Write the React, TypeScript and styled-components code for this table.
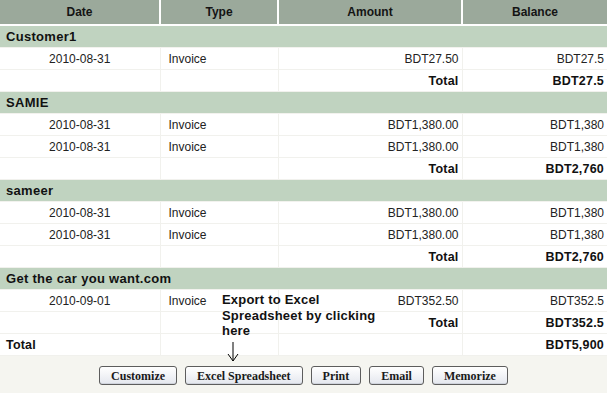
import React from "react";
import styled, { createGlobalStyle } from "styled-components";

const GlobalStyle = createGlobalStyle`
    html, body {
        margin: 0;
        padding: 0;
        background: #f5f5f0;
        font-family: "Liberation Sans", Arial, sans-serif;
    }
`;

type Line = { date: string; type: string; amount: string; balance: string };
type Group = { name: string; lines: Line[]; total: string };

const groups: Group[] = [
    {
        name: "Customer1",
        lines: [{ date: "2010-08-31", type: "Invoice", amount: "BDT27.50", balance: "BDT27.5" }],
        total: "BDT27.5",
    },
    {
        name: "SAMIE",
        lines: [
            { date: "2010-08-31", type: "Invoice", amount: "BDT1,380.00", balance: "BDT1,380" },
            { date: "2010-08-31", type: "Invoice", amount: "BDT1,380.00", balance: "BDT1,380" },
        ],
        total: "BDT2,760",
    },
    {
        name: "sameer",
        lines: [
            { date: "2010-08-31", type: "Invoice", amount: "BDT1,380.00", balance: "BDT1,380" },
            { date: "2010-08-31", type: "Invoice", amount: "BDT1,380.00", balance: "BDT1,380" },
        ],
        total: "BDT2,760",
    },
    {
        name: "Get the car you want.com",
        lines: [{ date: "2010-09-01", type: "Invoice", amount: "BDT352.50", balance: "BDT352.5" }],
        total: "BDT352.5",
    },
];

const buttons = ["Customize", "Excel Spreadsheet", "Print", "Email", "Memorize"];

function App() {
    return (
        <>
            <GlobalStyle />
            <Page>
                <Report>
                    <colgroup>
                        <col style={{ width: 160 }} />
                        <col style={{ width: 118 }} />
                        <col style={{ width: 184 }} />
                        <col style={{ width: 145 }} />
                    </colgroup>
                    <thead>
                        <tr>
                            <HeadCell>Date</HeadCell>
                            <HeadCell>Type</HeadCell>
                            <HeadCell>Amount</HeadCell>
                            <HeadCell $last>Balance</HeadCell>
                        </tr>
                    </thead>
                    <tbody>
                        {groups.map((g) => (
                            <React.Fragment key={g.name}>
                                <tr>
                                    <GroupCell colSpan={4}>{g.name}</GroupCell>
                                </tr>
                                {g.lines.map((l, i) => (
                                    <tr key={i}>
                                        <Cell $align="center">{l.date}</Cell>
                                        <Cell>{l.type}</Cell>
                                        <Cell $align="right">{l.amount}</Cell>
                                        <Cell $align="right">{l.balance}</Cell>
                                    </tr>
                                ))}
                                <tr>
                                    <Cell />
                                    <Cell />
                                    <Cell $align="right" $bold>
                                        Total
                                    </Cell>
                                    <Cell $align="right" $bold>
                                        {g.total}
                                    </Cell>
                                </tr>
                            </React.Fragment>
                        ))}
                        <tr>
                            <Cell $bold>Total</Cell>
                            <Cell />
                            <Cell />
                            <Cell $align="right" $bold>
                                BDT5,900
                            </Cell>
                        </tr>
                    </tbody>
                </Report>

                <Callout>
                    Export to Excel
                    <br />
                    Spreadsheet by clicking
                    <br />
                    here
                    <Arrow width="12" height="20" viewBox="0 0 12 20">
                        <path d="M6 0 V19 M1 12 L6 19 L11 12" fill="none" stroke="#000" strokeWidth="1" />
                    </Arrow>
                </Callout>

                <ButtonBar>
                    {buttons.map((b) => (
                        <ActionButton key={b}>{b}</ActionButton>
                    ))}
                </ButtonBar>
            </Page>
        </>
    );
}

export default App;

const Page = styled.div`
    position: relative;
    width: 607px;
`;

const Report = styled.table`
    width: 607px;
    table-layout: fixed;
    border-collapse: collapse;
    font-size: 12px;
    color: #1e1e1e;
`;

const HeadCell = styled.th<{ $last?: boolean }>`
    height: 24px;
    padding: 0;
    background: #9ba99b;
    color: #141414;
    font-size: 12px;
    font-weight: bold;
    text-align: center;
    border-right: ${(p) => (p.$last ? "none" : "2px solid #fff")};
    border-bottom: 2px solid #fff;
`;

const GroupCell = styled.td`
    height: 21px;
    padding: 0 6px;
    background: #c0d3c0;
    color: #111;
    font-size: 13px;
    font-weight: bold;
    letter-spacing: 0.3px;
    border-bottom: 1px solid #f2f2ee;
`;

const Cell = styled.td<{ $align?: "left" | "center" | "right"; $bold?: boolean }>`
    height: 21px;
    padding: 0 ${(p) => (p.$align === "right" ? "3px" : p.$align === "center" ? "0" : "6px")};
    padding-left: ${(p) => (p.$align === "left" || !p.$align ? "8px" : undefined)};
    background: #fff;
    text-align: ${(p) => p.$align ?? "left"};
    font-weight: ${(p) => (p.$bold ? "bold" : "normal")};
    font-size: ${(p) => (p.$bold ? "12.5px" : "12px")};
    letter-spacing: ${(p) => (p.$bold ? "0.2px" : "0")};
    color: ${(p) => (p.$bold ? "#111" : "#222")};
    white-space: nowrap;
    border-right: 1px solid #f1f1ed;
    border-bottom: 1px solid #f1f1ed;
    &:first-child {
        padding-left: ${(p) => (p.$bold ? "6px" : "0")};
    }
    &:last-child {
        border-right: none;
    }
`;

const Callout = styled.div`
    position: absolute;
    left: 222px;
    top: 292px;
    font-size: 13px;
    font-weight: bold;
    line-height: 15.5px;
    color: #111;
    letter-spacing: 0.2px;
`;

const Arrow = styled.svg`
    display: block;
    margin: 3px 0 0 5px;
`;

const ButtonBar = styled.div`
    display: flex;
    justify-content: center;
    gap: 8px;
    padding: 10px 0 0 0;
`;

const ActionButton = styled.button`
    height: 19px;
    padding: 0 11px;
    font-family: "Liberation Serif", "Times New Roman", serif;
    font-size: 12px;
    font-weight: bold;
    color: #1a1a1a;
    background: linear-gradient(#ffffff, #e4e7ee);
    border: 1px solid #5d5d5d;
    border-radius: 3px;
    box-shadow: inset 0 -1px 0 #cfd3dc;
    line-height: 16px;
    cursor: pointer;
`;
